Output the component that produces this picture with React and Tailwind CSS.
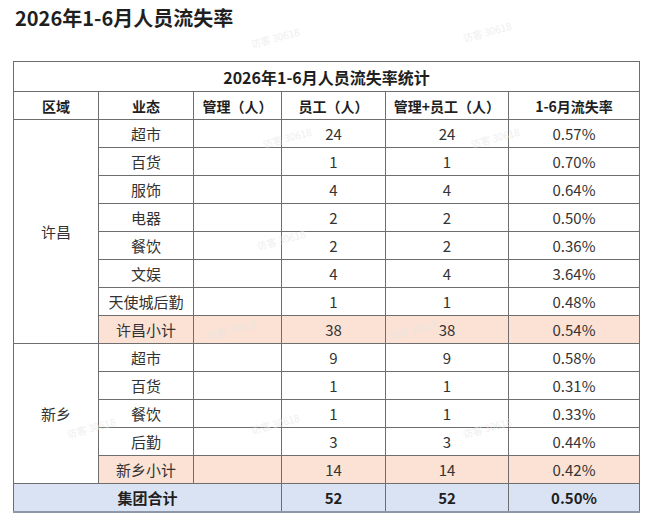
import React from "react";

const xuchang = [
  ["超市", 24, 24, "0.57%"],
  ["百货", 1, 1, "0.70%"],
  ["服饰", 4, 4, "0.64%"],
  ["电器", 2, 2, "0.50%"],
  ["餐饮", 2, 2, "0.36%"],
  ["文娱", 4, 4, "3.64%"],
  ["天使城后勤", 1, 1, "0.48%"],
];

const xinxiang = [
  ["超市", 9, 9, "0.58%"],
  ["百货", 1, 1, "0.31%"],
  ["餐饮", 1, 1, "0.33%"],
  ["后勤", 3, 3, "0.44%"],
];

// faint watermark stamps over the sheet
const marks = [
  [250, 30], [462, 24], [262, 130], [470, 130], [256, 232],
  [206, 322], [388, 322], [66, 420], [250, 416], [462, 420],
];

const cell = "border border-[#6e6e6e] h-[28px] p-0 text-center";

const Row = ({ name, staff, total, rate, sub }) => (
  <>
    <td className={`${cell} ${sub ? "bg-[#fbe2d4]" : ""}`}>{name}</td>
    <td className={`${cell} ${sub ? "bg-[#fbe2d4]" : ""}`}></td>
    <td className={`${cell} ${sub ? "bg-[#fbe2d4]" : ""}`}>{staff}</td>
    <td className={`${cell} ${sub ? "bg-[#fbe2d4]" : ""}`}>{total}</td>
    <td className={`${cell} ${sub ? "bg-[#fbe2d4]" : ""}`}>{rate}</td>
  </>
);

const Region = ({ label, rows, subName, subStaff, subTotal, subRate }) => (
  <>
    {rows.map((r, i) => (
      <tr key={r[0] + i}>
        {i === 0 && (
          <td rowSpan={rows.length + 1} className={cell}>
            {label}
          </td>
        )}
        <Row name={r[0]} staff={r[1]} total={r[2]} rate={r[3]} />
      </tr>
    ))}
    <tr>
      <Row name={subName} staff={subStaff} total={subTotal} rate={subRate} sub />
    </tr>
  </>
);

export default function App() {
  return (
    <div
      className="relative w-[650px] h-[521px] bg-white overflow-hidden px-3 pt-1"
      style={{ fontFamily: '"Noto Sans CJK SC", "Noto Sans", sans-serif' }}
    >
      <h1 className="ml-[3px] text-[20px] leading-[28px] font-bold text-[#1f1f1f]">
        2026年1-6月人员流失率
      </h1>

      <table className="mt-[29px] ml-[1px] w-[626px] border-collapse table-fixed text-[15px] text-[#333] leading-none">
        <colgroup>
          <col className="w-[85px]" />
          <col className="w-[95px]" />
          <col className="w-[88px]" />
          <col className="w-[104px]" />
          <col className="w-[123px]" />
          <col className="w-[131px]" />
        </colgroup>
        <tbody>
          <tr>
            <td colSpan={6} className="border border-[#6e6e6e] h-[30px] p-0 text-center text-[16px] font-bold text-[#1f1f1f]">
              2026年1-6月人员流失率统计
            </td>
          </tr>
          <tr className="text-[14px] font-bold text-[#1f1f1f]">
            <td className={cell}>区域</td>
            <td className={cell}>业态</td>
            <td className={cell}>管理（人）</td>
            <td className={cell}>员工（人）</td>
            <td className={cell}>管理+员工（人）</td>
            <td className={cell}>1-6月流失率</td>
          </tr>
          <Region label="许昌" rows={xuchang} subName="许昌小计" subStaff={38} subTotal={38} subRate="0.54%" />
          <Region label="新乡" rows={xinxiang} subName="新乡小计" subStaff={14} subTotal={14} subRate="0.42%" />
          <tr className="bg-[#dae3f3] font-bold text-[#1f1f1f]">
            <td colSpan={3} className={`${cell} border-b-2 border-b-[#8c97a8]`}>集团合计</td>
            <td className={`${cell} border-b-2 border-b-[#8c97a8]`}>52</td>
            <td className={`${cell} border-b-2 border-b-[#8c97a8]`}>52</td>
            <td className={`${cell} border-b-2 border-b-[#8c97a8]`}>0.50%</td>
          </tr>
        </tbody>
      </table>

      {marks.map(([x, y], i) => (
        <span
          key={i}
          className="absolute text-[10px] text-[#e6e6e6] opacity-60 -rotate-[15deg] pointer-events-none select-none whitespace-nowrap"
          style={{ left: x, top: y }}
        >
          访客 30618
        </span>
      ))}
    </div>
  );
}
